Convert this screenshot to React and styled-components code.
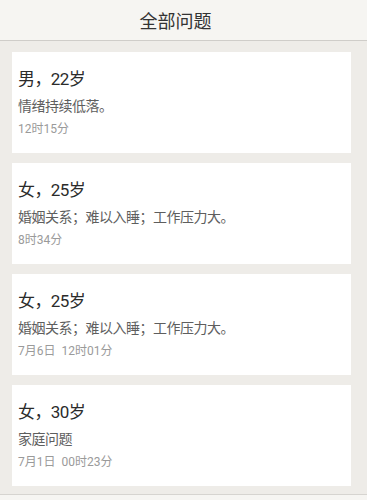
import React from "react";
import styled, { createGlobalStyle } from "styled-components";

const GlobalStyle = createGlobalStyle`
  html, body {
    margin: 0;
    padding: 0;
    background: #eeece8;
    font-family: Roboto, "Noto Sans CJK SC", sans-serif;
  }
`;

const Page = styled.div`
  width: 367px;
  min-height: 500px;
  background: #eeece8;
  display: flex;
  flex-direction: column;
`;

const Header = styled.header`
  height: 41px;
  box-sizing: border-box;
  padding-right: 16px;
  background: #f6f5f2;
  border-bottom: 1px solid #cfcdc9;
  display: flex;
  align-items: center;
  justify-content: center;
`;

const Title = styled.h1`
  margin: 0;
  font-size: 18px;
  font-weight: 400;
  color: #333;
`;

const List = styled.div`
  display: flex;
  flex-direction: column;
  gap: 10px;
  padding: 11px 16px 8px 12px;
`;

const Card = styled.div`
  height: 101px;
  box-sizing: border-box;
  background: #fff;
  padding: 16px 6px 0;
  display: flex;
  flex-direction: column;
`;

const Who = styled.div`
  font-size: 17px;
  line-height: 22px;
  letter-spacing: -0.6px;
  color: #2b2b2b;
`;

const Desc = styled.div`
  margin-top: 6px;
  font-size: 14px;
  line-height: 20px;
  letter-spacing: -0.5px;
  color: #5e5e5e;
`;

const Time = styled.div`
  margin-top: 4px;
  font-size: 12px;
  line-height: 18px;
  color: #9a9a9a;
  white-space: pre;
`;

const Footer = styled.div`
  flex: 1;
  border-top: 1px solid #d6d4d0;
  background: #f6f5f2;
`;

const questions = [
  { who: "男，22岁", desc: "情绪持续低落。", time: "12时15分" },
  { who: "女，25岁", desc: "婚姻关系；难以入睡；工作压力大。", time: "8时34分" },
  { who: "女，25岁", desc: "婚姻关系；难以入睡；工作压力大。", time: "7月6日  12时01分" },
  { who: "女，30岁", desc: "家庭问题", time: "7月1日  00时23分" }
];

export default function App() {
  return (
    <Page>
      <GlobalStyle />
      <Header>
        <Title>全部问题</Title>
      </Header>
      <List>
        {questions.map((q, i) => (
          <Card key={i}>
            <Who>{q.who}</Who>
            <Desc>{q.desc}</Desc>
            <Time>{q.time}</Time>
          </Card>
        ))}
      </List>
      <Footer />
    </Page>
  );
}
